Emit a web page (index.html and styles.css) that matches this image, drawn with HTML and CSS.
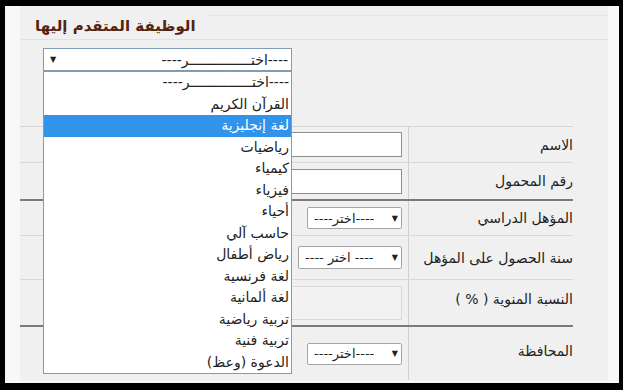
FILE: index.html
```html
<!DOCTYPE html>
<html lang="ar">
<head>
    <meta charset="UTF-8">
    <title>الوظيفة المتقدم إليها</title>
    <link rel="stylesheet" href="styles.css">
</head>
<body>
    <div class="frame">
        <div class="panel">
            <div class="heading">
                <h2 class="title">الوظيفة المتقدم إليها</h2>
                <div class="rule"></div>
            </div>

            <div class="picker">
                <div class="combo">
                    <div class="select-box wide">
                        <span class="arrow">▼</span>
                        <span class="value" dir="rtl">----اختـــــــــــــــر----</span>
                    </div>
                    <ul class="options" dir="rtl">
                        <li>----اختـــــــــــــــر----</li>
                        <li>القرآن الكريم</li>
                        <li class="active">لغة إنجليزية</li>
                        <li>رياضيات</li>
                        <li>كيمياء</li>
                        <li>فيزياء</li>
                        <li>أحياء</li>
                        <li>حاسب آلي</li>
                        <li>رياض أطفال</li>
                        <li>لغة فرنسية</li>
                        <li>لغة ألمانية</li>
                        <li>تربية رياضية</li>
                        <li>تربية فنية</li>
                        <li>الدعوة (وعظ)</li>
                    </ul>
                </div>
            </div>

            <div class="form-table" dir="rtl">
                <div class="row r1">
                    <div class="label">الاسم</div>
                    <div class="field"><input class="text-input" type="text"></div>
                </div>
                <div class="row r2 thick">
                    <div class="label">رقم المحمول</div>
                    <div class="field"><input class="text-input" type="text"></div>
                </div>
                <div class="row r3">
                    <div class="label">المؤهل الدراسي</div>
                    <div class="field">
                        <div class="select-box small">
                            <span class="arrow">▼</span>
                            <span class="value">----اختر----</span>
                        </div>
                    </div>
                </div>
                <div class="row r4">
                    <div class="label">سنة الحصول على المؤهل</div>
                    <div class="field">
                        <div class="select-box medium">
                            <span class="arrow">▼</span>
                            <span class="value">---- اختر ----</span>
                        </div>
                    </div>
                </div>
                <div class="row r5 thick">
                    <div class="label">النسبة المنوية ( % )</div>
                    <div class="field"><input class="text-input disabled" type="text" disabled></div>
                </div>
                <div class="row r6">
                    <div class="label">المحافظة</div>
                    <div class="field">
                        <div class="select-box small">
                            <span class="arrow">▼</span>
                            <span class="value">----اختر----</span>
                        </div>
                    </div>
                </div>
            </div>
        </div>
    </div>
</body>
</html>
```

FILE: styles.css
```css
* {
    box-sizing: border-box;
}
body {
    margin: 0;
    background: #000;
    font-family: "DejaVu Sans", sans-serif;
    font-size: 13px;
    color: #222;
}
.frame {
    margin: 6px 4px 0 5px;
    height: 377px;
    background: #f8f8f8;
    overflow: hidden;
}
.panel {
    margin-left: 15px;
    width: 588px;
    height: 374px;
    background: #f0f0f0;
    display: flex;
    flex-direction: column;
    overflow: hidden;
}
.heading {
    display: flex;
    align-items: flex-start;
    height: 34px;
    border-bottom: 1px solid #e2e2e2;
}
.title {
    margin: 10px 0 0 15px;
    font-size: 15px;
    line-height: 20px;
    font-weight: bold;
    color: #55240f;
}
.rule {
    flex: 1;
    margin: 9px 0 0 10px;
    border-top: 1px solid #f0e2d6;
}
.picker {
    height: 86px;
    padding: 8px 0 0 23px;
}
.combo {
    position: relative;
    width: 249px;
}
.select-box {
    display: flex;
    align-items: center;
    justify-content: space-between;
    background: #fff;
    border: 1px solid #a5a5a5;
    border-radius: 2px;
    padding: 0 3px 0 6px;
    white-space: nowrap;
}
.select-box.wide {
    height: 23px;
    border-color: #7f9db9;
    border-radius: 0;
    font-size: 14px;
}
.select-box.small {
    width: 95px;
    height: 22px;
}
.select-box.medium {
    width: 104px;
    height: 23px;
}
.arrow {
    font-size: 8px;
    color: #222;
}
.options {
    position: absolute;
    top: 100%;
    left: 0;
    width: 249px;
    margin: 0;
    padding: 0;
    list-style: none;
    background: #fff;
    border: 1px solid #7f9db9;
    font-size: 14px;
    z-index: 2;
}
.options li {
    height: 21.5px;
    line-height: 21px;
    padding-right: 2px;
    white-space: nowrap;
}
.options li.active {
    background: #3193ea;
    color: #fff;
}
.form-table {
    width: 553px;
    border-top: 1px solid #d6d6d6;
    flex: 1;
    display: flex;
    flex-direction: column;
}
.row {
    display: flex;
    align-items: center;
    border-bottom: 1px solid #d8d8d8;
}
.row.thick {
    border-bottom: 2px solid #7a7a7a;
}
.r1 { height: 36px; }
.r2 { height: 38px; }
.r3 { height: 35px; }
.r4 { height: 44px; }
.r5 { height: 47px; }
.r6 { flex: 1; border-bottom: none; }
.label {
    width: 165px;
    height: 100%;
    display: flex;
    align-items: center;
    border-left: 1px solid #d0d0d0;
    white-space: nowrap;
    font-size: 14px;
}
.r5 .label {
    padding-bottom: 8px;
}
.r6 .label {
    padding-bottom: 5px;
}
.field {
    flex: 1;
    display: flex;
    padding-right: 6px;
}
.text-input {
    width: 200px;
    height: 25px;
    border: 1px solid #8e8e8e;
    background: #fff;
    font: inherit;
}
.text-input.disabled {
    height: 34px;
    border-color: #dadada;
    background: #f2f2f2;
}
```
